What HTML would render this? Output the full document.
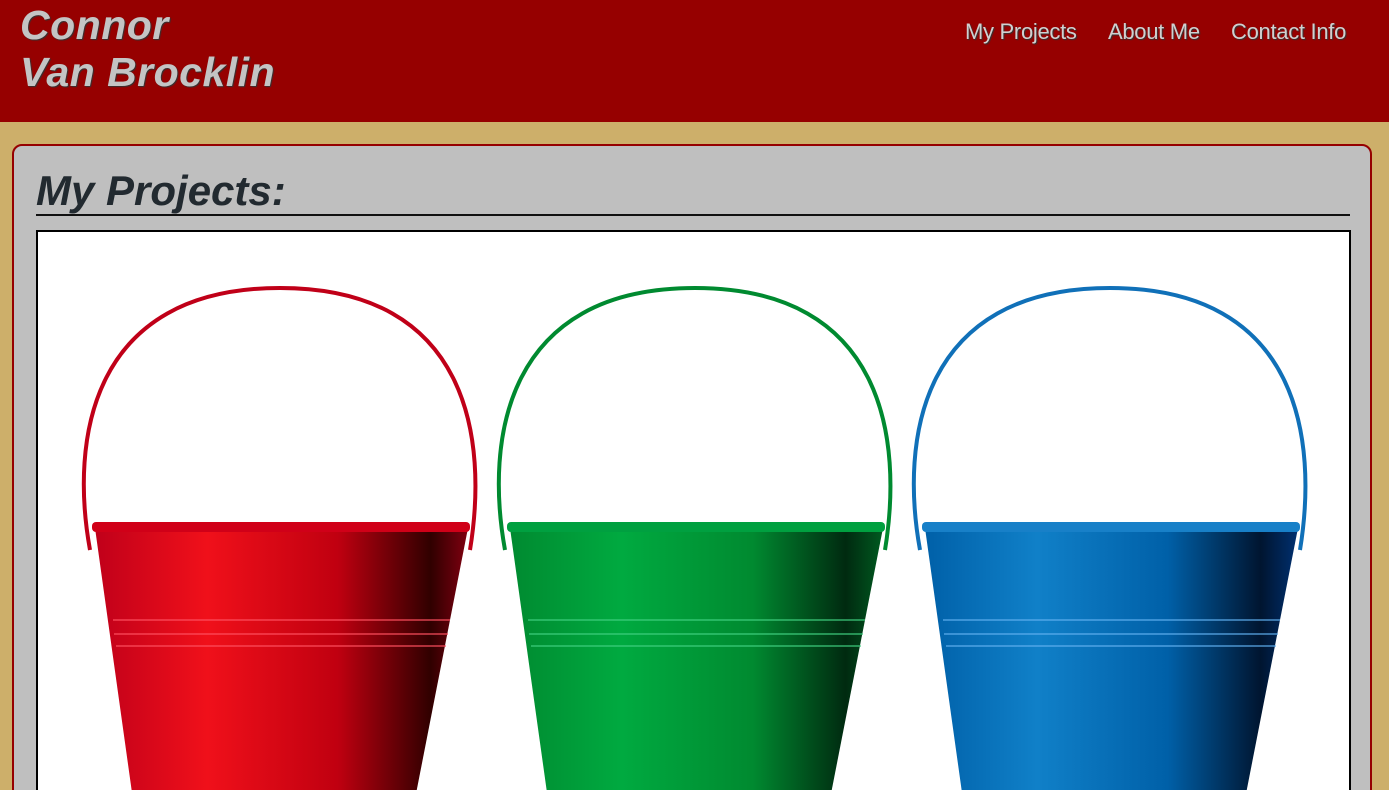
<!DOCTYPE html>
<html style="overflow:hidden;height:790px"><head><style>
body{margin:0;width:1389px;height:790px;overflow:hidden;background:#cdaf6a;font-family:"Liberation Sans",sans-serif;position:relative}
.hdr{position:absolute;left:0;top:0;width:1389px;height:122px;background:#960000}
.name{position:absolute;left:20px;top:2px;font-size:41px;line-height:47px;font-weight:bold;font-style:italic;color:#c4c4c4;text-shadow:1px 1px 1px #333;letter-spacing:0.5px}
.nav{position:absolute;top:19px;font-size:22px;color:#d0d0d0;text-shadow:1px 1px 1px #333;letter-spacing:-0.3px}
.card{position:absolute;left:12px;top:144px;width:1356px;height:700px;background:#bfbfbf;border:2px solid #960000;border-radius:10px}
h1{position:absolute;left:22px;top:22px;margin:0;font-size:42px;font-style:italic;font-weight:bold;color:#222a30;width:1314px;border-bottom:2px solid #111;line-height:46px}
.img{position:absolute;left:22px;top:84px;width:1311px;height:600px;background:#fff;border:2px solid #000;overflow:hidden}
</style></head><body>
<div class="hdr">
<div class="name">Connor<br>Van Brocklin</div>
<div class="nav" style="left:965px">My Projects</div>
<div class="nav" style="left:1108px">About Me</div>
<div class="nav" style="left:1231px">Contact Info</div>
</div>
<div class="card">
<h1>My Projects:</h1>
<div class="img">
<svg width="1311" height="600" viewBox="38 232 1311 600">
<defs>
<linearGradient id="r" x1="0" x2="1"><stop offset="0" stop-color="#c0001a"/><stop offset="0.3" stop-color="#f0101a"/><stop offset="0.65" stop-color="#c00010"/><stop offset="0.9" stop-color="#300000"/><stop offset="1" stop-color="#800010"/></linearGradient>
<linearGradient id="g" x1="0" x2="1"><stop offset="0" stop-color="#008a30"/><stop offset="0.3" stop-color="#00aa40"/><stop offset="0.65" stop-color="#008a30"/><stop offset="0.9" stop-color="#002a10"/><stop offset="1" stop-color="#005a20"/></linearGradient>
<linearGradient id="b" x1="0" x2="1"><stop offset="0" stop-color="#0060a8"/><stop offset="0.3" stop-color="#1080c8"/><stop offset="0.65" stop-color="#0060a8"/><stop offset="0.9" stop-color="#001530"/><stop offset="1" stop-color="#003070"/></linearGradient>
</defs>
<path d="M90 550 C70 440 90 288 280 288 C470 288 488 440 470 550" fill="none" stroke="#c00018" stroke-width="4"/>
<path d="M95 528 L468 528 L405 850 L140 850 Z" fill="url(#r)"/>
<rect x="92" y="522" width="378" height="10" rx="4" fill="#d00018"/>
<path d="M113 620 L450 620 M114 634 L448 634 M116 646 L446 646" stroke="#ff5060" stroke-width="2" opacity=".6"/>
<path d="M505 550 C485 440 505 288 695 288 C885 288 903 440 885 550" fill="none" stroke="#008a30" stroke-width="4"/>
<path d="M510 528 L883 528 L820 850 L555 850 Z" fill="url(#g)"/>
<rect x="507" y="522" width="378" height="10" rx="4" fill="#00a040"/>
<path d="M528 620 L865 620 M529 634 L863 634 M531 646 L861 646" stroke="#40d080" stroke-width="2" opacity=".6"/>
<path d="M920 550 C900 440 920 288 1110 288 C1300 288 1318 440 1300 550" fill="none" stroke="#1070b8" stroke-width="4"/>
<path d="M925 528 L1298 528 L1235 850 L970 850 Z" fill="url(#b)"/>
<rect x="922" y="522" width="378" height="10" rx="4" fill="#1880c8"/>
<path d="M943 620 L1280 620 M944 634 L1278 634 M946 646 L1276 646" stroke="#60b0f0" stroke-width="2" opacity=".6"/>
</svg>
</div>
</div>
</body></html>
